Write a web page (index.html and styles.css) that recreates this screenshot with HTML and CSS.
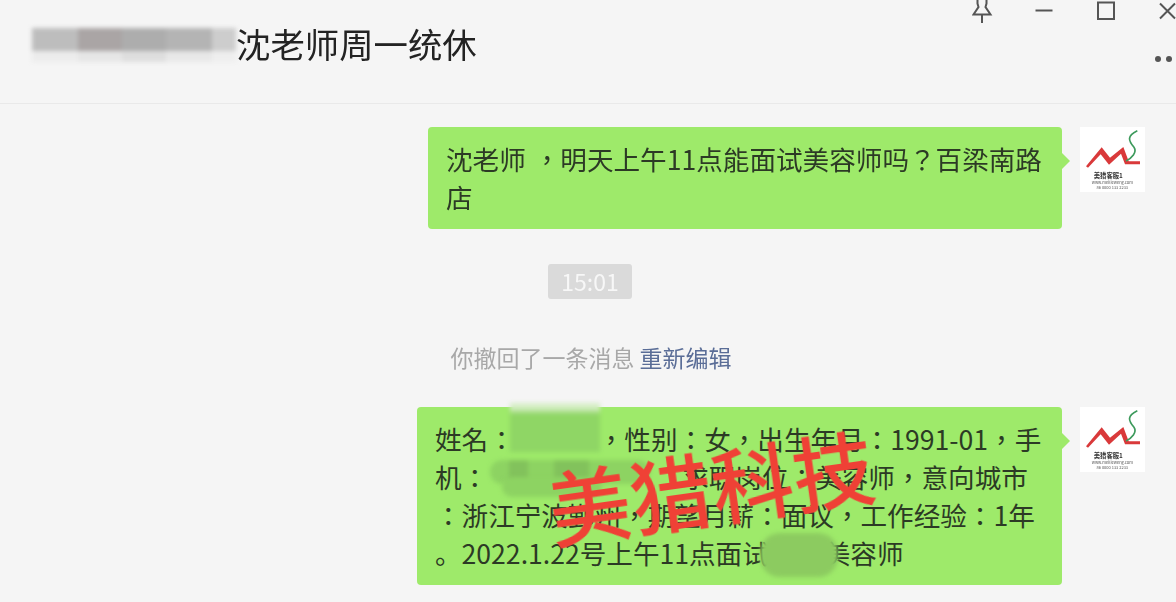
FILE: index.html
```html
<!DOCTYPE html>
<html lang="zh-CN">
<head>
  <meta charset="UTF-8" />
  <meta name="viewport" content="width=device-width, initial-scale=1.0" />
  <title>沈老师周一统休</title>
  <link rel="stylesheet" href="styles.css">
</head>
<body>
  <header class="top">
    <div class="name-mask">
      <span class="px px-a"></span>
      <span class="px px-b"></span>
      <span class="px px-c"></span>
      <span class="px px-d"></span>
      <span class="px px-e"></span>
    </div>
    <h1 class="title">沈老师周一统休</h1>
    <div class="side">
      <div class="controls">
        <svg class="ico" viewBox="0 0 20 24"><path d="M5.500 -2V3.500L6.500 7 1.500 14.500H18.500L13.500 7 14.500 3.500V-2M10 14.500V23"/></svg>
        <svg class="ico" viewBox="0 0 20 24"><path d="M1.500 10.500H18.500"/></svg>
        <svg class="ico" viewBox="0 0 20 24"><path d="M2 2.500H18V19H2Z"/></svg>
        <svg class="ico" viewBox="0 0 20 24"><path d="M2 3.500 17 18.500M17 3.500 2 18.500"/></svg>
      </div>
      <div class="dots"><i></i><i></i></div>
    </div>
  </header>

  <main class="chat">
    <div class="msg">
      <div class="bubble bubble-one" lang="zh-Hant">沈老师 ，明天上午11点能面试美容师吗？百梁南路<br>店</div>
      <svg class="avatar" viewBox="60 24 195 195">
        <rect x="60" y="24" width="195" height="195" fill="#fff"/>
        <path d="M78 142 125 85 150 116 190 84 206 127H240V136H195L183 104 147 137 122 106 84 146Z" fill="#d9393a"/>
        <path d="M232 35C200 50 205 65 222 85 232 100 215 118 198 126" fill="none" stroke="#3d9a5c" stroke-width="5"/>
        <text x="145" y="176" class="logo-big">美猎客服1</text>
        <text x="157" y="194" class="logo-small">www.meilieweng.com</text>
        <text x="157" y="211" class="logo-small">86 0000 133 2233</text>
      </svg>
    </div>

    <div class="time-row"><span class="time">15:01</span></div>
    <div class="recall">你撤回了一条消息 <a class="re-edit">重新编辑</a></div>

    <div class="msg">
      <div class="bubble bubble-two" lang="zh-Hant">
        姓名：<span class="gap-a"></span>，性别：女，出生年月：1991-01，手<br>
        机：<span class="gap-b"></span>求职岗位：美容师，意向城市<br>
        ：浙江宁波鄞州，期望月薪：面议，工作经验：1年<br>
        <span lang="zh-CN">。</span>2022.1.22号上午11点面试<span class="gap-c"></span>美容师
        <span class="mask mask-a"></span>
        <span class="mask mask-b"></span>
        <span class="mask mask-c"></span>
        <span class="mask mask-d"></span>
        <span class="stamp">美猎科技</span>
      </div>
      <svg class="avatar" viewBox="60 24 195 195">
        <rect x="60" y="24" width="195" height="195" fill="#fff"/>
        <path d="M78 142 125 85 150 116 190 84 206 127H240V136H195L183 104 147 137 122 106 84 146Z" fill="#d9393a"/>
        <path d="M232 35C200 50 205 65 222 85 232 100 215 118 198 126" fill="none" stroke="#3d9a5c" stroke-width="5"/>
        <text x="145" y="176" class="logo-big">美猎客服1</text>
        <text x="157" y="194" class="logo-small">www.meilieweng.com</text>
        <text x="157" y="211" class="logo-small">86 0000 133 2233</text>
      </svg>
    </div>
  </main>
</body>
</html>
```

FILE: styles.css
```css
body {
  margin: 0;
  height: 602px;
  overflow: hidden;
  background: #f5f5f5;
  font-family: "Noto Sans CJK SC", "Liberation Sans", sans-serif;
  color: #232323;
}
.top {
  height: 103px;
  border-bottom: 1px solid #e9e9e9;
  display: flex;
  padding-left: 32px;
}
.name-mask {
  display: flex;
  width: 204px;
  height: 34px;
  margin-top: 28px;
  filter: blur(2px);
}
.px { display: block; height: 100%; }
.px-a { width: 46px; background: linear-gradient(#bdbdbd 68%, #ececec 68%); }
.px-b { width: 44px; background: linear-gradient(#aaa5a5 68%, #e6e6e6 68%); }
.px-c { width: 44px; background: linear-gradient(#adadad 68%, #dedede 68%); }
.px-d { width: 46px; background: linear-gradient(#b4b4b4 68%, #e8e8e8 68%); }
.px-e { width: 24px; background: linear-gradient(#cdcdcd 68%, #eeeeee 68%); }
.title {
  margin: 20px 0 0;
  font-size: 34.4px;
  font-weight: 400;
  line-height: 46px;
  height: 46px;
  filter: blur(0.6px);
}
.side {
  margin-left: auto;
  width: 204px;
  overflow: hidden;
  filter: blur(0.5px);
}
.controls {
  display: flex;
  gap: 42px;
  width: 260px;
}
.ico {
  width: 20px;
  height: 24px;
  flex: none;
  overflow: visible;
  fill: none;
  stroke: #555;
  stroke-width: 2;
}
.dots {
  display: flex;
  gap: 5px;
  margin: 32px 0 0 183px;
}
.dots i {
  width: 6px;
  height: 6px;
  border-radius: 50%;
  background: #555;
  flex: none;
}
.chat { padding: 23px 31px 0 0; }
.msg {
  display: flex;
  justify-content: flex-end;
  align-items: flex-start;
  gap: 18px;
}
.bubble {
  position: relative;
  background: #9eea6a;
  border-radius: 4px;
  padding: 13px 18px;
  font-family: "Noto Sans CJK TC", "Liberation Sans", sans-serif;
  font-size: 26.6px;
  line-height: 38px;
  color: #2c3a25;
  white-space: nowrap;
  filter: blur(0.5px);
}
.bubble::after {
  content: "";
  position: absolute;
  right: -8px;
  top: 26px;
  border-left: 8px solid #9eea6a;
  border-top: 8px solid transparent;
  border-bottom: 8px solid transparent;
}
.bubble-one { width: 598px; word-spacing: 2px; }
.bubble-two { width: 609px; }
.avatar {
  width: 65px;
  height: 65px;
  flex: none;
  filter: blur(0.6px);
}
.logo-big { font-size: 19px; font-weight: 700; fill: #333; text-anchor: middle; }
.logo-small { font-size: 12px; fill: #555; text-anchor: middle; }
.time-row {
  display: flex;
  justify-content: center;
  margin-top: 35px;
  padding-left: 35px;
}
.time {
  background: #dadada;
  color: #f7f7f7;
  border-radius: 3px;
  font-size: 23px;
  line-height: 35px;
  padding: 0 13px;
  filter: blur(0.6px);
}
.recall {
  margin-top: 41px;
  height: 67px;
  text-align: center;
  padding-left: 37px;
  font-size: 23px;
  line-height: 35px;
  color: #a8a8a8;
  filter: blur(0.7px);
}
.re-edit { color: #5a6d97; }
.gap-a { display: inline-block; width: 83px; }
.gap-b { display: inline-block; width: 194px; }
.gap-c { display: inline-block; width: 55px; }
.mask {
  position: absolute;
  background: #8dd362;
  filter: blur(2px);
}
.mask-a {
  left: 93px;
  top: -4px;
  width: 90px;
  height: 49px;
  background: linear-gradient(#d6eec6 10%, #8fd665 24%);
}
.mask-b {
  left: 73px;
  top: 53px;
  width: 160px;
  height: 24px;
  border-radius: 12px;
  background: linear-gradient(90deg, #8dd362 12%, #82c25c 12% 24%, #8dd362 24% 40%, #82c25c 40% 62%, #8dd362 62%);
}
.mask-c { left: 85px; top: 70px; width: 100px; height: 20px; border-radius: 10px; }
.mask-d { left: 343px; top: 126px; width: 78px; height: 44px; border-radius: 20px; background: #8ccb60; }
.stamp {
  position: absolute;
  left: 130px;
  top: 28px;
  font-size: 82px;
  font-weight: 500;
  line-height: 100px;
  color: #ef4136;
  transform: rotate(-8deg);
}
```
